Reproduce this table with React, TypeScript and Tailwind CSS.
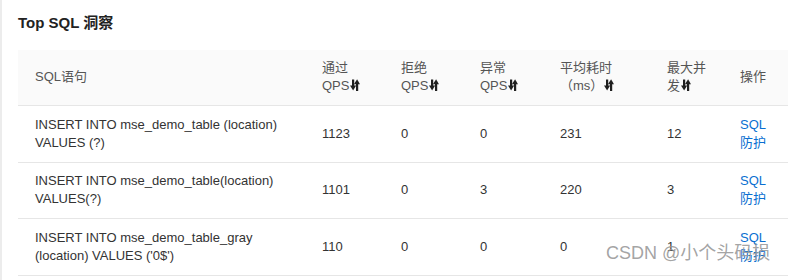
import React from "react";

const SortIcon = () => (
  <svg width="10" height="12" viewBox="0 0 10 12" className="inline-block ml-[1px] align-[-1px]">
    <rect x="2" y="0.5" width="2.2" height="7" fill="#1f1f1f" />
    <polygon points="0,6.5 6.2,6.5 3.1,11.5" fill="#1f1f1f" />
    <rect x="6" y="4" width="2.2" height="8" fill="#1f1f1f" />
    <polygon points="3.9,5.2 10,5.2 7.1,0.3" fill="#1f1f1f" />
  </svg>
);

const rows = [
  { sql: ["INSERT INTO mse_demo_table (location)", "VALUES (?)"], pass: "1123", reject: "0", err: "0", rt: "231", conc: "12" },
  { sql: ["INSERT INTO mse_demo_table(location)", "VALUES(?)"], pass: "1101", reject: "0", err: "3", rt: "220", conc: "3" },
  { sql: ["INSERT INTO mse_demo_table_gray", "(location) VALUES ('0$')"], pass: "110", reject: "0", err: "0", rt: "0", conc: "1" },
];

export default function App() {
  return (
    <div
      className="relative w-[788px] h-[280px] overflow-hidden bg-white border-l-2 border-[#ececec]"
      style={{ fontFamily: '"Liberation Sans", "Noto Sans CJK SC", sans-serif' }}
    >
      <h2 className="pl-[16px] pt-[14px] h-[50px] text-[15px] font-bold text-[#222] leading-[18px]">Top SQL 洞察</h2>

      <div className="ml-[16px] w-[800px]">
        <table className="table-fixed border-collapse text-[13px] text-[#333] w-[800px]">
          <colgroup>
            <col className="w-[287px]" />
            <col className="w-[79px]" />
            <col className="w-[79px]" />
            <col className="w-[80px]" />
            <col className="w-[107px]" />
            <col className="w-[73px]" />
            <col className="w-[95px]" />
          </colgroup>
          <thead>
            <tr className="bg-[#fafafa] h-[55px] text-[#555] border-b border-[#e6e6e6] leading-[18px]">
              <th className="font-normal text-left pl-[17px] align-middle">SQL语句</th>
              <th className="font-normal text-left pl-[17px] align-middle">通过<br />QPS<SortIcon /></th>
              <th className="font-normal text-left pl-[17px] align-middle">拒绝<br />QPS<SortIcon /></th>
              <th className="font-normal text-left pl-[17px] align-middle">异常<br />QPS<SortIcon /></th>
              <th className="font-normal text-left pl-[17px] align-middle">平均耗时<br />（ms）<SortIcon /></th>
              <th className="font-normal text-left pl-[17px] align-middle">最大并<br />发<SortIcon /></th>
              <th className="font-normal text-left pl-[17px] align-middle">操作</th>
            </tr>
          </thead>
          <tbody>
            {rows.map((r, i) => (
              <tr key={i} className={`border-b border-[#e6e6e6] leading-[18px] ${i === 1 ? "h-[56px]" : "h-[57px]"}`}>
                <td className="pl-[17px] align-middle">{r.sql[0]}<br />{r.sql[1]}</td>
                <td className="pl-[17px] align-middle">{r.pass}</td>
                <td className="pl-[17px] align-middle">{r.reject}</td>
                <td className="pl-[17px] align-middle">{r.err}</td>
                <td className="pl-[17px] align-middle">{r.rt}</td>
                <td className="pl-[17px] align-middle">{r.conc}</td>
                <td className="pl-[17px] align-middle text-[#0a6fd1]">SQL<br />防护</td>
              </tr>
            ))}
          </tbody>
        </table>
      </div>

      <div className="absolute left-[604px] top-[242px] text-[18px] leading-[22px] text-[#999]/90 pointer-events-none">
        CSDN @小个头码损
      </div>
    </div>
  );
}
